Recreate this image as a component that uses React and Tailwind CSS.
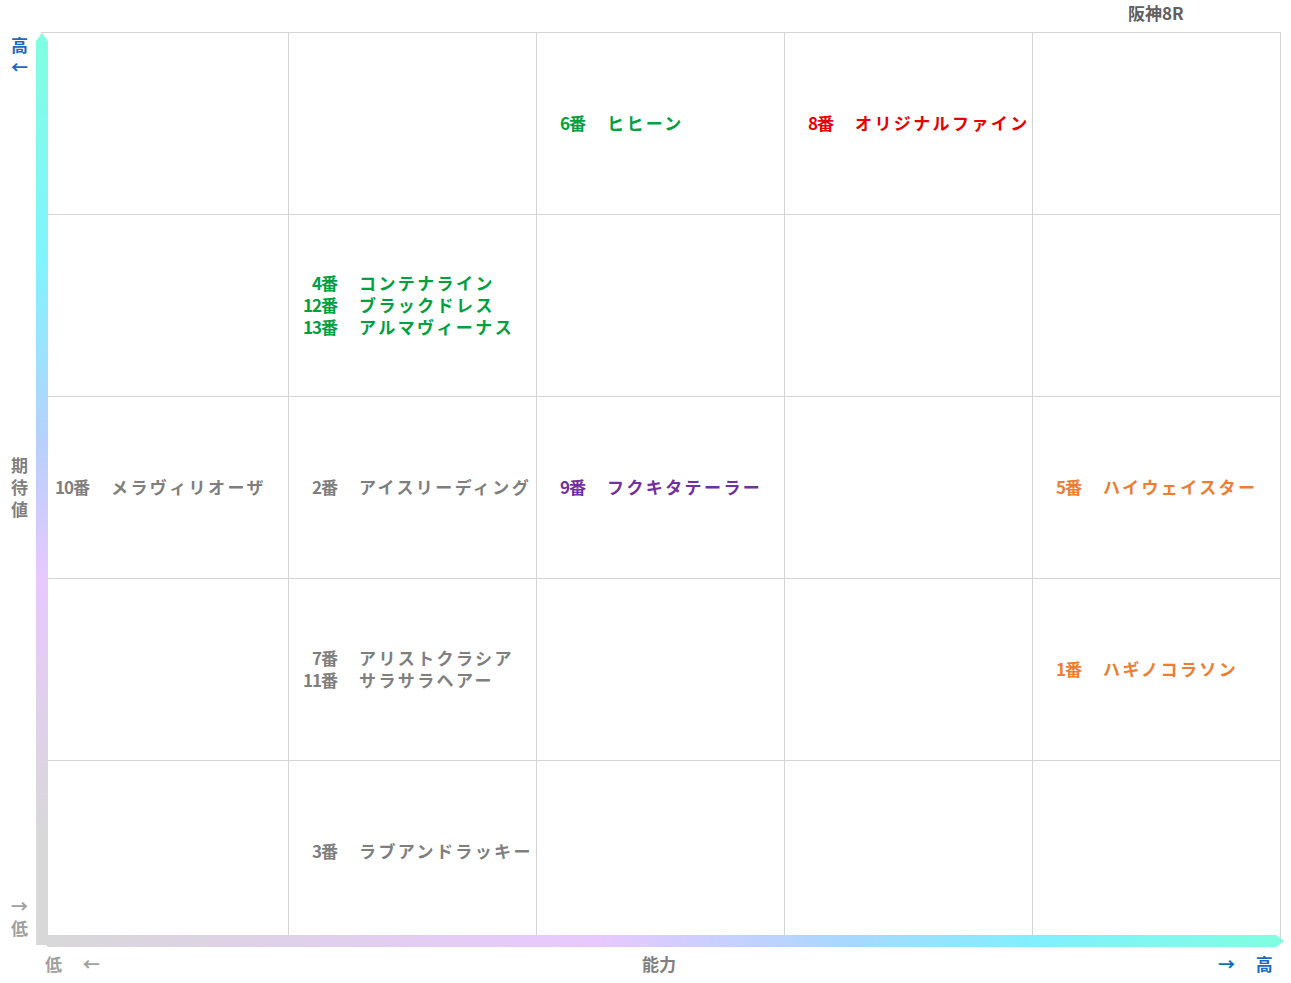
const F = { fontFamily: '"Noto Sans CJK JP", "Noto Sans", sans-serif' };
const G = 'text-[#00a040]', R = 'text-[#e60000]', P = 'text-[#7030a0]', O = 'text-[#ed7d31]', Y = 'text-[#7f7f7f]';
const cells = [
  [[], [], [[G, '6番', 'ヒヒーン']], [[R, '8番', 'オリジナルファイン']], []],
  [[], [[G, '4番', 'コンテナライン'], [G, '12番', 'ブラックドレス'], [G, '13番', 'アルマヴィーナス']], [], [], []],
  [[[Y, '10番', 'メラヴィリオーザ']], [[Y, '2番', 'アイスリーディング']], [[P, '9番', 'フクキタテーラー']], [], [[O, '5番', 'ハイウェイスター']]],
  [[], [[Y, '7番', 'アリストクラシア'], [Y, '11番', 'サラサラヘアー']], [], [], [[O, '1番', 'ハギノコラソン']]],
  [[], [[Y, '3番', 'ラブアンドラッキー']], [], [], []],
];
export default function App() {
  return (
    <div className="relative w-[1291px] h-[983px] bg-white font-bold" style={F}>
      <div className="absolute left-[1128px] top-0 text-[17px] text-[#606060]">阪神8R</div>
      <div className="absolute left-[41px] top-[32px] grid grid-cols-[repeat(5,248px)] grid-rows-[repeat(5,182px)] border-t border-[#d4d4d4]">
        {cells.flat().map((c, i) => (
          <div key={i} className="border-r border-b border-[#d4d4d4] flex flex-col justify-center pl-[8px] pb-[2px]">
            {c.map(([col, n, name], j) => (
              <div key={j} className={`flex items-center h-[22px] text-[17px] whitespace-nowrap ${col}`}>
                <span className="w-[40px] text-right tracking-[-1px]">{n}</span>
                <span className="ml-[22px] tracking-[2.4px]">{name}</span>
              </div>
            ))}
          </div>
        ))}
      </div>
      <div className="absolute left-[36px] top-[33px] w-[12px] h-[912px] [clip-path:polygon(50%_0,100%_8px,100%_100%,0_100%,0_8px)] bg-[linear-gradient(to_bottom,#80ffe0_0%,#80f4ff_25%,#b8d0ff_45%,#e8c8ff_60%,#d8d8d8_88%)]" />
      <div className="absolute left-[36px] top-[935px] w-[1248px] h-[12px] [clip-path:polygon(0_0,calc(100%-8px)_0,100%_50%,calc(100%-8px)_100%,12px_100%,0_0)] bg-[linear-gradient(to_right,#d8d8d8_0%,#e8c8ff_45%,#a8d8ff_65%,#80f0ff_80%,#80ffe0_100%)]" />
      <div className="absolute left-[11px] top-[34px] text-[17px] leading-[22px] text-[#1a6ac0] flex flex-col items-center"><span>高</span><span>←</span></div>
      <div className="absolute left-[11px] top-[454px] text-[17px] leading-[22px] text-[#7f7f7f] flex flex-col items-center"><span>期</span><span>待</span><span>値</span></div>
      <div className="absolute left-[11px] top-[895px] text-[17px] leading-[22px] text-[#a0a0a0] flex flex-col items-center"><span>→</span><span>低</span></div>
      <div className="absolute left-[45px] top-[951px] text-[17px] text-[#a0a0a0]">低　 ←</div>
      <div className="absolute left-[642px] top-[951px] text-[17px] text-[#7f7f7f]">能力</div>
      <div className="absolute left-[1218px] top-[951px] text-[17px] text-[#1a6ac0]">→　 高</div>
    </div>
  );
}
